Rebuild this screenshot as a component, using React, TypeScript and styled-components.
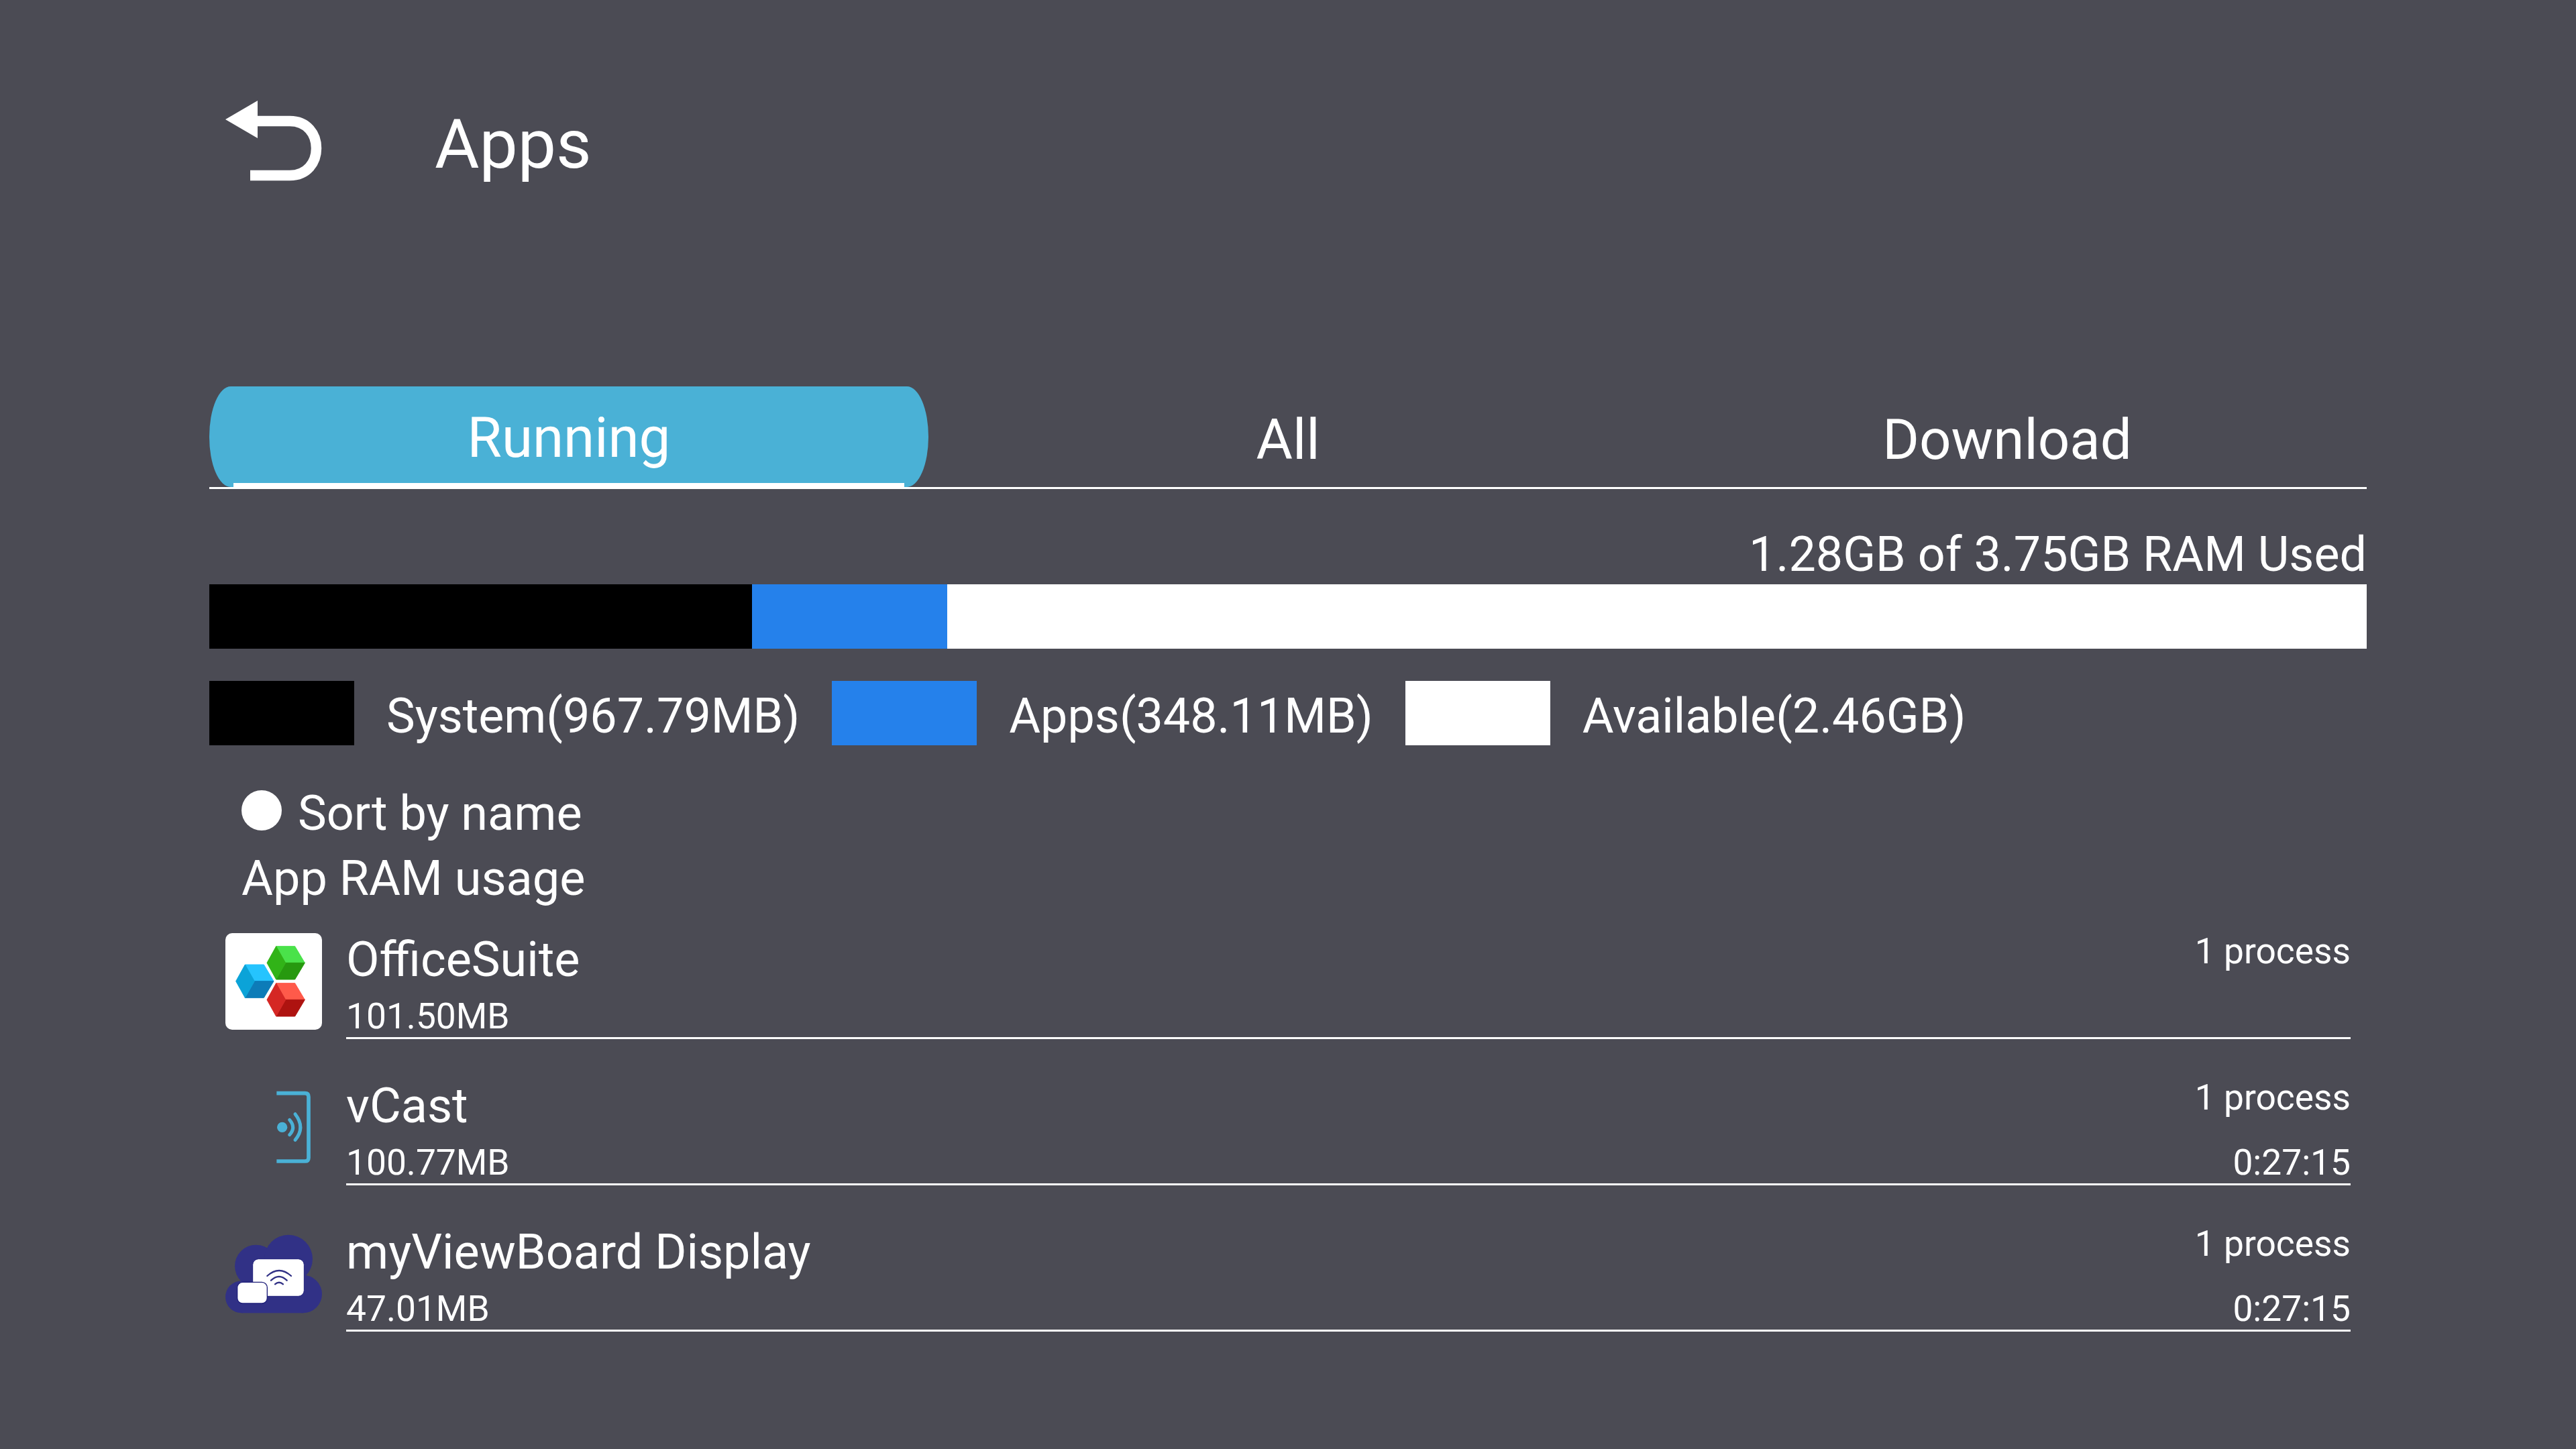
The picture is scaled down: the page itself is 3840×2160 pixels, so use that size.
import React from "react";
import styled, { createGlobalStyle } from "styled-components";

const GlobalStyle = createGlobalStyle`
  html, body {
    margin: 0;
    padding: 0;
    background: #4b4b54;
  }
  body {
    font-family: Roboto, "Liberation Sans", sans-serif;
    color: #fff;
  }
`;

const Page = styled.div`
  box-sizing: border-box;
  width: 3840px;
  height: 2160px;
  padding: 150px 312px 0;
  background: #4b4b54;
  overflow: hidden;
`;

const Header = styled.header`
  display: flex;
  align-items: flex-start;
  gap: 168px;
  padding-left: 24px;
`;

const Title = styled.h1`
  margin: 0;
  font-size: 102px;
  font-weight: 400;
  line-height: 130px;
`;

const Tabs = styled.div`
  display: flex;
  height: 150px;
  margin-top: 296px;
  border-bottom: 3px solid #fff;
`;

const Tab = styled.div<{ $active?: boolean }>`
  position: relative;
  flex: 1;
  text-align: center;
  font-size: 83.5px;
  line-height: ${(p) => (p.$active ? "154px" : "160px")};
  background: ${(p) => (p.$active ? "#4ab1d6" : "transparent")};
  border-radius: 32px / 75px;

  ${(p) =>
    p.$active &&
    `
    &::after {
      content: "";
      position: absolute;
      left: 36px;
      right: 36px;
      bottom: -3px;
      height: 9px;
      background: #fff;
    }
  `}
`;

const RamUsed = styled.div`
  height: 142px;
  display: flex;
  align-items: flex-end;
  justify-content: flex-end;
  font-size: 71.85px;
  line-height: 88px;
`;

const Bar = styled.div`
  display: flex;
  height: 96px;
  background: #fff;
`;

const BarPart = styled.div<{ $color: string }>`
  background: ${(p) => p.$color};
`;

const Legend = styled.div`
  display: flex;
  align-items: flex-start;
  gap: 48px;
  margin-top: 48px;
  height: 96px;
`;

const Swatch = styled.div<{ $color: string }>`
  width: 216px;
  height: 96px;
  background: ${(p) => p.$color};
`;

const LegendLabel = styled.span`
  font-size: 71.85px;
  line-height: 105px;
`;

const SortRow = styled.div`
  display: flex;
  gap: 24px;
  margin-top: 54px;
  padding-left: 48px;
  font-size: 72px;
  line-height: 96px;
`;

const Radio = styled.div`
  width: 60px;
  height: 60px;
  margin-top: 13px;
  border-radius: 50%;
  background: #fff;
`;

const SectionLabel = styled.div`
  padding-left: 48px;
  font-size: 72px;
  line-height: 98px;
`;

const AppList = styled.div`
  display: flex;
  flex-direction: column;
  gap: 52px;
  margin-top: 24px;
`;

const AppRow = styled.div`
  display: flex;
  gap: 36px;
  padding: 0 24px;
`;

const IconBox = styled.div`
  flex: none;
  width: 144px;
  height: 144px;
  margin-top: 8px;

  svg {
    display: block;
  }
`;

const AppBody = styled.div`
  flex: 1;
  display: flex;
  justify-content: space-between;
  height: 163px;
  border-bottom: 3px solid #fff;
`;

const Column = styled.div<{ $right?: boolean }>`
  display: flex;
  flex-direction: column;
  justify-content: space-between;
  text-align: ${(p) => (p.$right ? "right" : "left")};
`;

const AppName = styled.div`
  font-size: 72px;
  line-height: 96px;
`;

const Process = styled.div`
  font-size: 53.3px;
  line-height: 70px;
`;

const SmallText = styled.div`
  font-size: 53.3px;
  line-height: 62px;
`;

const BackIcon = () => (
  <svg width="144" height="120" viewBox="0 0 144 120" fill="none">
    <polygon points="0,28 48,0 48,56" fill="#fff" />
    <path
      d="M46 30.5H96C122 30.5 135.5 50 135.5 71C135.5 92 122 111.5 96 111.5H37"
      stroke="#fff"
      strokeWidth="15.5"
    />
  </svg>
);

const Cube = ({ x, y, light, left, dark }: { x: number; y: number; light: string; left: string; dark: string }) => (
  <g transform={`translate(${x} ${y})`} strokeWidth="3" strokeLinejoin="round">
    <polygon points="43,2 127,2 171,76 85,76" fill={light} stroke={light} />
    <polygon points="85,76 171,76 127,150 43,150" fill={dark} stroke={dark} />
    <polygon points="43,2 85,76 43,150 2,76" fill={left} stroke={left} />
  </g>
);

const OfficeSuiteIcon = () => (
  <svg width="144" height="144" viewBox="78 63 432 432">
    <rect x="78" y="63" width="432" height="432" rx="30" fill="#fff" />
    <Cube x={262} y={120} light="#4ae24a" left="#31b317" dark="#27990f" />
    <Cube x={123} y={202} light="#25c4fe" left="#0ba3d8" dark="#0d7cb8" />
    <Cube x={262} y={285} light="#ff5a4a" left="#d52724" dark="#ae1310" />
  </svg>
);

const VCastIcon = () => (
  <svg width="144" height="144" viewBox="78 57 432 432" fill="none" stroke="#4ab1d6">
    <path d="M307 119H434Q450 119 450 135V407Q450 423 434 423H307" strokeWidth="17" />
    <circle cx="332" cy="271" r="23" fill="#4ab1d6" stroke="none" />
    <path d="M365 238Q395 272 365 305" strokeWidth="15" strokeLinecap="round" />
    <path d="M390 212Q437 272 390 328" strokeWidth="15" strokeLinecap="round" />
  </svg>
);

const ViewBoardIcon = () => (
  <svg width="144" height="144" viewBox="78 51 432 432" fill="none">
    <g fill="#313186">
      <circle cx="150" cy="370" r="72" />
      <circle cx="215" cy="232" r="95" />
      <circle cx="360" cy="200" r="108" />
      <circle cx="425" cy="357" r="85" />
      <rect x="150" y="300" width="275" height="142" />
    </g>
    <rect x="200" y="200" width="230" height="167" rx="26" fill="#fff" stroke="#1f1f7a" strokeWidth="3" />
    <rect x="131" y="304" width="134" height="95" rx="24" fill="#fff" stroke="#1f1f7a" strokeWidth="4" />
    <g stroke="#313186" strokeLinecap="round">
      <path d="M265 276Q318 228 372 276" strokeWidth="7" />
      <path d="M282 296Q318 262 353 296" strokeWidth="7" />
      <path d="M300 313Q318 297 336 313" strokeWidth="7" />
    </g>
  </svg>
);

interface AppInfo {
  name: string;
  size: string;
  time?: string;
  icon: React.ReactNode;
}

const apps: AppInfo[] = [
  { name: "OfficeSuite", size: "101.50MB", icon: <OfficeSuiteIcon /> },
  { name: "vCast", size: "100.77MB", time: "0:27:15", icon: <VCastIcon /> },
  { name: "myViewBoard Display", size: "47.01MB", time: "0:27:15", icon: <ViewBoardIcon /> },
];

const legend = [
  { color: "#000", label: "System(967.79MB)" },
  { color: "#2581eb", label: "Apps(348.11MB)" },
  { color: "#fff", label: "Available(2.46GB)" },
];

const App: React.FC = () => {
  return (
    <Page>
      <GlobalStyle />
      <Header>
        <BackIcon />
        <Title>Apps</Title>
      </Header>

      <Tabs>
        <Tab $active>Running</Tab>
        <Tab>All</Tab>
        <Tab>Download</Tab>
      </Tabs>

      <RamUsed>1.28GB of 3.75GB RAM Used</RamUsed>
      <Bar>
        <BarPart $color="#000" style={{ width: 809 }} />
        <BarPart $color="#2581eb" style={{ width: 291 }} />
      </Bar>

      <Legend>
        {legend.map((item) => (
          <React.Fragment key={item.label}>
            <Swatch $color={item.color} />
            <LegendLabel>{item.label}</LegendLabel>
          </React.Fragment>
        ))}
      </Legend>

      <SortRow>
        <Radio />
        <span>Sort by name</span>
      </SortRow>
      <SectionLabel>App RAM usage</SectionLabel>

      <AppList>
        {apps.map((app) => (
          <AppRow key={app.name}>
            <IconBox>{app.icon}</IconBox>
            <AppBody>
              <Column>
                <AppName>{app.name}</AppName>
                <SmallText>{app.size}</SmallText>
              </Column>
              <Column $right>
                <Process>1 process</Process>
                {app.time && <SmallText>{app.time}</SmallText>}
              </Column>
            </AppBody>
          </AppRow>
        ))}
      </AppList>
    </Page>
  );
};

export default App;
